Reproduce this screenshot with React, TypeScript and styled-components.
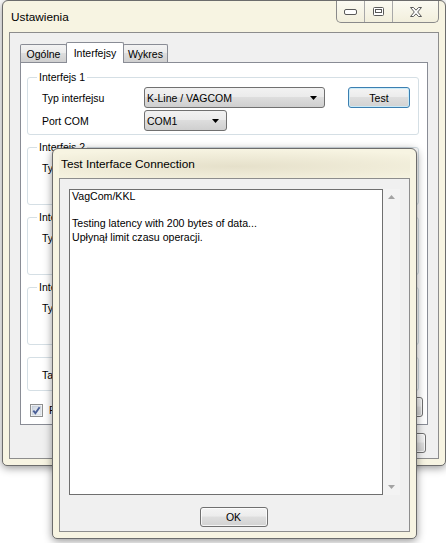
import React from 'react';
import styled, { createGlobalStyle } from 'styled-components';

const ui = `"Liberation Sans", Arial, sans-serif`;

const GlobalStyle = createGlobalStyle`
  html, body {
    margin: 0;
    padding: 0;
    background: #ffffff;
  }
  * {
    box-sizing: border-box;
  }
`;

const Styles = {
    Desktop: styled.div`
        position: relative;
        width: 446px;
        height: 543px;
        overflow: hidden;
        background: #ffffff;
        font-family: ${ui};
        font-size: 10.5px;
        color: #000;
    `,

    // windows sit on the desktop at their own coordinates
    Window: styled.div<{ $x: number; $y: number; $w: number; $h: number }>`
        position: absolute;
        left: ${p => p.$x}px;
        top: ${p => p.$y}px;
        width: ${p => p.$w}px;
        height: ${p => p.$h}px;
        display: flex;
        flex-direction: column;
        padding: 0 6px 6px;
        background: #f7f4e2;
        border: 1px solid #6c6c6c;
        border-radius: 6px 6px 5px 5px;
        box-shadow: 0 2px 9px rgba(0, 0, 0, 0.42);
    `,

    TitleBar: styled.div<{ $h: number; $glow?: boolean }>`
        flex: none;
        height: ${p => p.$h}px;
        display: flex;
        align-items: center;
        padding-left: 2px;
        font-size: 11.8px;
        background: ${p => p.$glow
            ? 'radial-gradient(ellipse 75% 60% at 50% 60%, rgba(150, 135, 95, 0.18), rgba(150, 135, 95, 0) 100%)'
            : 'transparent'};
    `,

    CaptionGroup: styled.div`
        display: flex;
        align-self: flex-start;
        margin-left: auto;
        height: 22px;
        border: 1px solid #8a8a8a;
        border-top: none;
        border-radius: 0 0 5px 5px;
        background: linear-gradient(#fbfaf2, #f2efdc);
        overflow: hidden;
    `,

    CaptionButton: styled.div<{ $w: number }>`
        width: ${p => p.$w}px;
        display: flex;
        align-items: center;
        justify-content: center;

        & + & {
            border-left: 1px solid #a8a8a8;
        }
    `,

    Client: styled.div<{ $pad: string }>`
        flex: 1;
        min-height: 0;
        display: flex;
        flex-direction: column;
        padding: ${p => p.$pad};
        background: #f0f0f0;
        border: 1px solid #8d8d8d;
    `,

    TabStrip: styled.div`
        display: flex;
        align-items: flex-end;
        height: 20px;
    `,

    Tab: styled.div<{ $w: number; $active?: boolean }>`
        position: relative;
        width: ${p => p.$w}px;
        height: ${p => p.$active ? 21 : 18}px;
        margin-bottom: ${p => p.$active ? -1 : 0}px;
        z-index: ${p => p.$active ? 1 : 0};
        display: flex;
        align-items: center;
        justify-content: center;
        padding-bottom: ${p => p.$active ? 1 : 0}px;
        border: 1px solid #898c95;
        border-bottom: none;
        border-radius: 2px 2px 0 0;
        background: ${p => p.$active
            ? '#ffffff'
            : 'linear-gradient(#f3f3f3 0%, #ebebeb 45%, #dddddd 50%, #cfcfcf 100%)'};

        & + & {
            margin-left: -1px;
        }
    `,

    TabPanel: styled.div`
        height: 363px;
        flex: none;
        display: flex;
        flex-direction: column;
        gap: 5px;
        padding: 7px 8px 0 6px;
        background: #ffffff;
        border: 1px solid #898c95;
        overflow: hidden;
    `,

    Group: styled.fieldset<{ $plain?: boolean }>`
        margin: ${p => p.$plain ? '7px 0 0' : '0'};
        padding: ${p => p.$plain ? '6px 0 5px' : '3px 0 3px'};
        height: ${p => p.$plain ? 'auto' : '65px'};
        min-width: 0;
        display: flex;
        flex-direction: column;
        gap: 2px;
        border: 1px solid #d5dfe5;
        border-radius: 3px;
    `,

    Legend: styled.legend`
        margin-left: 9px;
        padding: 0 2px;
        line-height: 14px;
    `,

    Row: styled.div`
        display: flex;
        align-items: center;
        height: 21px;
        padding-left: 14px;
    `,

    FieldLabel: styled.span`
        flex: none;
        width: 102px;
    `,

    Combo: styled.div<{ $w: number }>`
        flex: none;
        width: ${p => p.$w}px;
        height: 21px;
        display: flex;
        align-items: center;
        padding: 0 7px 0 2px;
        border: 1px solid #707070;
        border-radius: 3px;
        background: linear-gradient(#f2f2f2 0%, #ebebeb 45%, #dddddd 50%, #cfcfcf 100%);
        white-space: nowrap;

        svg {
            margin-left: auto;
        }
    `,

    Button: styled.button<{ $w: number; $default?: boolean }>`
        flex: none;
        width: ${p => p.$w}px;
        height: ${p => p.$default ? 21 : 20}px;
        padding: 0;
        font: inherit;
        color: #000;
        border: 1px solid ${p => p.$default ? '#3c7fb1' : '#707070'};
        border-radius: 3px;
        background: linear-gradient(#f4f4f4 0%, #ececec 45%, #dedede 50%, #d2d2d2 100%);
        box-shadow: inset 0 0 0 1px ${p => p.$default ? 'rgba(200, 235, 250, 0.9)' : 'rgba(255, 255, 255, 0.75)'};
    `,

    CheckRow: styled.div`
        display: flex;
        align-items: flex-end;
        height: 20px;
        margin: 1px -4px 0 3px;
        gap: 6px;
    `,

    CheckText: styled.span`
        line-height: 13px;
    `,

    Footer: styled.div<{ $align: string; $top: number }>`
        display: flex;
        justify-content: ${p => p.$align};
        gap: 6px;
        margin-top: ${p => p.$top}px;
        padding-right: 2px;
    `,

    LogBox: styled.div`
        flex: 1;
        min-height: 0;
        display: flex;
    `,

    LogText: styled.div`
        flex: 1;
        padding: 0 2px;
        background: #ffffff;
        border: 1px solid #6f6f6f;
        font-size: 10.6px;
        line-height: 13.5px;
        white-space: pre-line;
    `,

    ScrollBar: styled.div`
        flex: none;
        width: 17px;
        display: flex;
        flex-direction: column;
        justify-content: space-between;
        align-items: center;
        padding: 6px 0 6px;
        background: #f3f3f3;
    `,
};

const MinIcon = () => (
    <svg width="13" height="6" viewBox="0 0 13 6">
        <rect x="0.5" y="0.5" width="12" height="5" rx="1.5" fill="#fff" stroke="#5a5a5a" />
    </svg>
);

const MaxIcon = () => (
    <svg width="11" height="9" viewBox="0 0 11 9">
        <rect x="0.5" y="0.5" width="10" height="8" rx="1" fill="#fff" stroke="#5a5a5a" />
        <rect x="2.5" y="2.5" width="6" height="3" fill="none" stroke="#5a5a5a" />
    </svg>
);

const CloseIcon = () => (
    <svg width="12" height="10" viewBox="0 0 12 10">
        <path
            d="M0.5 0.5 H3.5 L6 3.2 L8.5 0.5 H11.5 L7.7 5 L11.5 9.5 H8.5 L6 6.8 L3.5 9.5 H0.5 L4.3 5 Z"
            fill="#fff"
            stroke="#5a5a5a"
            strokeLinejoin="round"
        />
    </svg>
);

const DropArrow = () => (
    <svg width="7" height="4" viewBox="0 0 7 4">
        <polygon points="0,0 7,0 3.5,4" fill="#000" />
    </svg>
);

const ScrollArrow: React.FC<{ down?: boolean }> = ({ down }) => (
    <svg width="7" height="4" viewBox="0 0 7 4">
        <polygon points={down ? '0,0 7,0 3.5,4' : '0,4 7,4 3.5,0'} fill="#a3a3a3" />
    </svg>
);

const CheckBox = () => (
    <svg width="13" height="13" viewBox="0 0 13 13">
        <defs>
            <linearGradient id="cbfill" x1="0" y1="0" x2="1" y2="1">
                <stop offset="0" stopColor="#cbd3de" />
                <stop offset="1" stopColor="#f4f6f9" />
            </linearGradient>
        </defs>
        <rect x="0.5" y="0.5" width="12" height="12" fill="#fff" stroke="#8e8f8f" />
        <rect x="2" y="2" width="9" height="9" fill="url(#cbfill)" stroke="#b9c1cc" strokeWidth="0.6" />
        <path d="M3.3 6.6 L5.4 9.2 L9.6 3.2" fill="none" stroke="#4a5f97" strokeWidth="1.9" />
    </svg>
);

const extra = ['Interfejs 2', 'Interfejs 3', 'Interfejs 4'];

export default function App() {
    return (
        <>
            <GlobalStyle />
            <Styles.Desktop>
                <Styles.Window $x={2} $y={0} $w={444} $h={466}>
                    <Styles.TitleBar $h={31}>
                        Ustawienia
                        <Styles.CaptionGroup>
                            <Styles.CaptionButton $w={27}><MinIcon /></Styles.CaptionButton>
                            <Styles.CaptionButton $w={28}><MaxIcon /></Styles.CaptionButton>
                            <Styles.CaptionButton $w={46}><CloseIcon /></Styles.CaptionButton>
                        </Styles.CaptionGroup>
                    </Styles.TitleBar>
                    <Styles.Client $pad="9px 10px 0 10px">
                        <Styles.TabStrip>
                            <Styles.Tab $w={47}>Ogólne</Styles.Tab>
                            <Styles.Tab $w={58} $active>Interfejsy</Styles.Tab>
                            <Styles.Tab $w={45}>Wykres</Styles.Tab>
                        </Styles.TabStrip>
                        <Styles.TabPanel>
                            <Styles.Group>
                                <Styles.Legend>Interfejs 1</Styles.Legend>
                                <Styles.Row>
                                    <Styles.FieldLabel>Typ interfejsu</Styles.FieldLabel>
                                    <Styles.Combo $w={181}>K-Line / VAGCOM<DropArrow /></Styles.Combo>
                                    <Styles.Button $w={62} $default style={{ marginLeft: 23 }}>Test</Styles.Button>
                                </Styles.Row>
                                <Styles.Row>
                                    <Styles.FieldLabel>Port COM</Styles.FieldLabel>
                                    <Styles.Combo $w={83}>COM1<DropArrow /></Styles.Combo>
                                </Styles.Row>
                            </Styles.Group>
                            {extra.map(name => (
                                <Styles.Group key={name}>
                                    <Styles.Legend>{name}</Styles.Legend>
                                    <Styles.Row>
                                        <Styles.FieldLabel>Typ interfejsu</Styles.FieldLabel>
                                        <Styles.Combo $w={181}><DropArrow /></Styles.Combo>
                                    </Styles.Row>
                                </Styles.Group>
                            ))}
                            <Styles.Group $plain>
                                <Styles.Row>
                                    <Styles.FieldLabel>Tablica kodów</Styles.FieldLabel>
                                    <Styles.Combo $w={181}><DropArrow /></Styles.Combo>
                                </Styles.Row>
                            </Styles.Group>
                            <Styles.CheckRow>
                                <CheckBox />
                                <Styles.CheckText>Pokaż szczegóły</Styles.CheckText>
                                <Styles.Button $w={75} style={{ marginLeft: 'auto' }}>Domyślne</Styles.Button>
                            </Styles.CheckRow>
                        </Styles.TabPanel>
                        <Styles.Footer $align="flex-end" $top={8}>
                            <Styles.Button $w={75}>OK</Styles.Button>
                            <Styles.Button $w={75}>Anuluj</Styles.Button>
                        </Styles.Footer>
                    </Styles.Client>
                </Styles.Window>

                <Styles.Window $x={52} $y={148} $w={365} $h={391}>
                    <Styles.TitleBar $h={29} $glow>Test Interface Connection</Styles.TitleBar>
                    <Styles.Client $pad="10px 9px 4px 9px">
                        <Styles.LogBox>
                            <Styles.LogText>
                                {'VagCom/KKL\n\nTesting latency with 200 bytes of data...\nUpłynął limit czasu operacji.'}
                            </Styles.LogText>
                            <Styles.ScrollBar>
                                <ScrollArrow />
                                <ScrollArrow down />
                            </Styles.ScrollBar>
                        </Styles.LogBox>
                        <Styles.Footer $align="center" $top={12}>
                            <Styles.Button $w={68}>OK</Styles.Button>
                        </Styles.Footer>
                    </Styles.Client>
                </Styles.Window>
            </Styles.Desktop>
        </>
    );
}
